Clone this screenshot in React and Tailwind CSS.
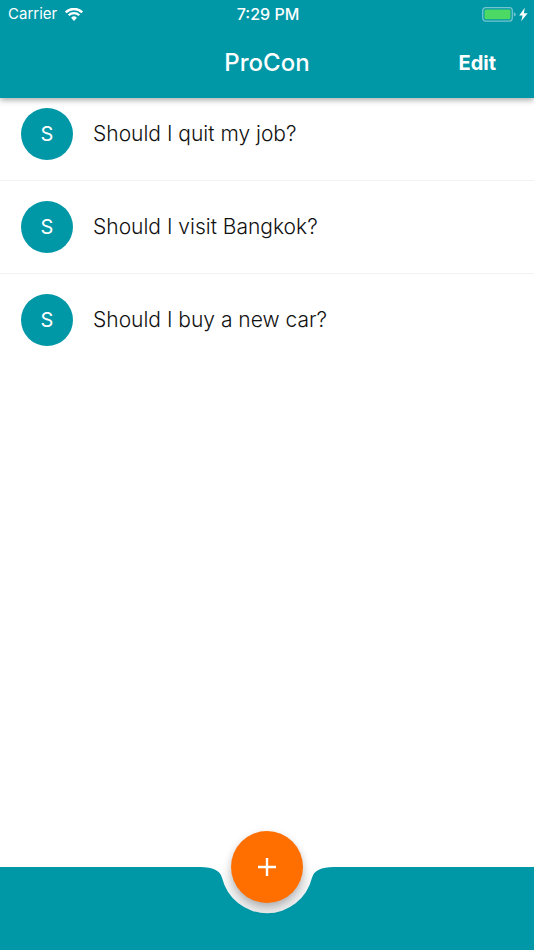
import React from 'react';

const questions = [
  { id: 1, title: 'Should I quit my job?' },
  { id: 2, title: 'Should I visit Bangkok?' },
  { id: 3, title: 'Should I buy a new car?' },
];

function WifiIcon() {
  return (
    <svg className="w-[18px] h-[13px]" viewBox="0 0 18 13" fill="none" stroke="white" aria-hidden="true">
      <path d="M0.8 4.3A11.8 11.8 0 0 1 17.2 4.3" strokeWidth="2.5" />
      <path d="M3.7 7.3A7.6 7.6 0 0 1 14.3 7.3" strokeWidth="2.3" />
      <path d="M9 12.9L6.1 9.8A4.1 4.1 0 0 1 11.9 9.8Z" fill="white" stroke="none" />
    </svg>
  );
}

function BatteryIcon() {
  return (
    <svg className="w-[46px] h-[15px]" viewBox="0 0 46 15" fill="none" aria-hidden="true">
      <rect x="0.7" y="0.7" width="29.6" height="13.4" rx="3" stroke="white" strokeOpacity="0.45" strokeWidth="1.3" />
      <rect x="2.5" y="2.5" width="26" height="9.8" rx="1.2" fill="#4cd964" />
      <path d="M31.8 5.2Q33.8 5.8 33.8 7.4T31.8 9.6Z" fill="white" fillOpacity="0.45" />
      <path d="M42.8 0.8L37.2 8.4H40.6L39.2 14.2L45.6 6.3H41.9Z" fill="white" />
    </svg>
  );
}

function StatusBar() {
  return (
    <div className="grid grid-cols-3 items-center h-7 pl-2 pr-1.5 text-[15px] leading-5">
      <div className="flex items-center gap-2">
        <span>Carrier</span>
        <WifiIcon />
      </div>
      <span className="text-center text-base leading-5 font-medium">7:29 PM</span>
      <div className="flex justify-end">
        <BatteryIcon />
      </div>
    </div>
  );
}

function Header() {
  return (
    <header className="relative z-10 bg-[#0097a7] text-white shadow-[0_2px_6px_rgba(0,0,0,0.35)]">
      <StatusBar />
      <div className="grid grid-cols-3 items-center h-[70px]">
        <h1 className="col-start-2 text-center text-2xl font-medium">ProCon</h1>
        <button type="button" className="justify-self-end mr-[38px] text-xl font-bold">
          Edit
        </button>
      </div>
    </header>
  );
}

function QuestionRow({ title }) {
  return (
    <li className="flex items-center gap-5 h-[93px] px-[21px] border-b border-[#f2f2f2] last:border-transparent">
      <span className="flex items-center justify-center w-13 h-13 rounded-full bg-[#0097a7] text-white text-xl">
        {title[0]}
      </span>
      <span className="text-[21px] font-light text-[#111]">{title}</span>
    </li>
  );
}

function BottomBar() {
  return (
    <footer className="relative flex h-[83px]">
      <div className="flex-1 bg-[#0097a7]" />
      <svg className="w-[140px] h-full" viewBox="0 0 140 83" aria-hidden="true">
        <defs>
          <linearGradient id="notch-shade" x1="0" y1="0" x2="0" y2="1">
            <stop offset="0" stopColor="#ffffff" />
            <stop offset="0.4" stopColor="#f4f4f4" />
            <stop offset="1" stopColor="#ebebeb" />
          </linearGradient>
        </defs>
        <path
          d="M3 0Q22.3 0 25 10.8A46.3 46.3 0 0 0 115 10.8Q117.7 0 137 0Z"
          fill="url(#notch-shade)"
        />
        <path
          d="M0 0H3Q22.3 0 25 10.8A46.3 46.3 0 0 0 115 10.8Q117.7 0 137 0H140V83H0Z"
          fill="#0097a7"
        />
      </svg>
      <div className="flex-1 bg-[#0097a7]" />
      <button
        type="button"
        aria-label="Add question"
        className="absolute left-1/2 top-0 -translate-x-1/2 -translate-y-1/2 flex items-center justify-center w-18 h-18 rounded-full bg-[#ff6f00] shadow-[0_4px_8px_rgba(0,0,0,0.28)]"
      >
        <svg className="w-[18px] h-[18px]" viewBox="0 0 18 18" stroke="white" strokeWidth="2.4" aria-hidden="true">
          <path d="M9 0V18M0 9H18" />
        </svg>
      </button>
    </footer>
  );
}

function App() {
  return (
    <div className="flex flex-col min-h-screen bg-white font-['Inter',sans-serif]">
      <Header />
      <main className="flex-1 -mt-[10px]">
        <ul>
          {questions.map((question) => (
            <QuestionRow key={question.id} title={question.title} />
          ))}
        </ul>
      </main>
      <BottomBar />
    </div>
  );
}

export default App;
